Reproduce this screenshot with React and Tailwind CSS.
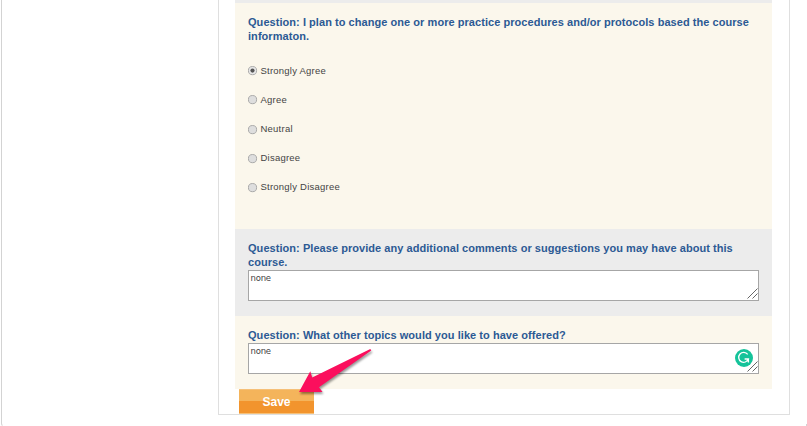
const options = ['Strongly Agree', 'Agree', 'Neutral', 'Disagree', 'Strongly Disagree'];

function Question({ children }) {
  return (
    <h3 className="text-[11px] leading-[14px] font-bold tracking-[0.05px] text-[#2c5a94] whitespace-nowrap">
      Question: {children}
    </h3>
  );
}

function Radio({ label, checked, low }) {
  return (
    <div className="h-[29px] flex items-start">
      <svg className={`w-[10px] h-[10px] mr-[2.5px] shrink-0 ${low ? 'mt-[2px]' : 'mt-px'}`} viewBox="0 0 10 10">
        <circle cx="4.5" cy="4.6" r="4.1" fill={checked ? '#e8e8e8' : '#dedede'} stroke="#a3a3a3" strokeWidth="0.9" />
        {checked && <circle cx="4.5" cy="4.6" r="2.1" fill="#555" />}
      </svg>
      <span className="text-[9.5px] leading-[12px] tracking-[0.23px] text-[#444]">{label}</span>
    </div>
  );
}

function Comment({ value, children }) {
  return (
    <div className="relative w-[511px] h-[31px] border border-[#a6a6a6] bg-white pl-[1.5px] pt-[2px]">
      <div className="font-['DejaVu_Sans',sans-serif] text-[8.5px] leading-[11px] tracking-[-0.2px] text-[#444]">{value}</div>
      {children}
      {/* resize grip */}
      <svg className="absolute right-0 bottom-px w-[11px] h-[11px]" viewBox="0 0 11 11">
        <path d="M0.5 10.5L10.5 0.5M5.5 10.5L10.5 5.5" stroke="#555" strokeWidth="0.9" fill="none" />
      </svg>
    </div>
  );
}

export default function App() {
  return (
    <div className="relative w-[807px] h-[426px] overflow-hidden bg-white pl-px font-['Liberation_Sans',Arial,sans-serif]">
      <div className="w-[806px] h-[427px] border-l border-b border-l-[#d3d3d3] border-b-transparent rounded-bl-[4px] pl-[216px]">
        <div className="w-[572px] h-[415px] border-x border-b border-[#dfdfdf] pl-[16px]">
          <div className="w-[537px]">
            <div className="h-[3px] bg-[#ececec]" />

            <div className="h-[226px] bg-[#fbf7ec] pl-[13px] pt-[12px]">
              <Question>
                I plan to change one or more practice procedures and/or protocols based the course
                <br />
                informaton.
              </Question>
              <div className="pt-[22px]">
                {options.map((o, i) => (
                  <Radio key={o} label={o} checked={i === 0} low={i > 1} />
                ))}
              </div>
            </div>

            <div className="h-[87px] bg-[#ececec] pl-[13px] pt-[12px]">
              <Question>
                Please provide any additional comments or suggestions you may have about this
                <br />
                course.
              </Question>
              <div className="pt-px">
                <Comment value="none" />
              </div>
            </div>

            <div className="h-[73px] bg-[#fbf7ec] pl-[13px] pt-[12px]">
              <Question>What other topics would you like to have offered?</Question>
              <div className="pt-px">
                <Comment value="none">
                  <svg className="absolute left-[486px] top-[5px] w-[18px] h-[18px]" viewBox="0 0 18 18">
                    <circle cx="9" cy="9" r="9" fill="#15c39a" />
                    <path
                      d="M12.7 5.3A5 5 0 1 0 13.4 10H9.6M13.4 9.4V13.4"
                      fill="none"
                      stroke="#fff"
                      strokeWidth="1.3"
                    />
                  </svg>
                </Comment>
              </div>
            </div>

            <button className="block ml-[4px] w-[75px] h-[25px] bg-linear-to-b from-[#f4b45b] from-50% to-[#f2942d] to-50% border-y border-[#f6c078] text-center text-[12px] leading-[24px] font-bold text-white">
              Save
            </button>
          </div>
        </div>
      </div>

      {/* far corner of the outer frame */}
      <div className="absolute left-[806px] top-[424px] w-px h-[2px] bg-[#d3d3d3]" />

      {/* arrow pointing at Save */}
      <svg className="absolute left-[290px] top-[340px] w-[90px] h-[60px] drop-shadow-[1px_2px_1px_rgba(0,0,0,0.4)]" viewBox="290 340 90 60">
        <path d="M299 391.9L310.3 371.3L312.2 377.6L370.3 349L371.3 350.4L345 369L319 387.3L322.5 391.9Z" fill="#fb0f5d" />
      </svg>
    </div>
  );
}
